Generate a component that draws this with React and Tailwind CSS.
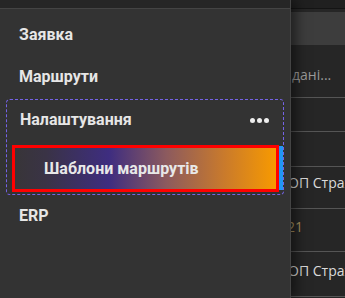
export default function App() {
  const font = { fontFamily: "Roboto, 'Liberation Sans', sans-serif" };
  const item = "flex h-[22px] items-center pl-[13px] text-[16px] font-bold text-[#e6e6e6]";
  return (
    <div className="flex h-[298px] w-[345px] overflow-hidden bg-[#262626]" style={font}>
      <aside className="relative z-10 flex h-full w-[291px] shrink-0 flex-col border-r border-[#444] bg-[#333333] shadow-[5px_0_12px_rgba(0,0,0,0.5)]">
        <div className="h-[9px] shrink-0 border-b border-[#444] bg-[#262626]" />
        <nav className="flex flex-col px-[6px] pt-[15px]">
          <div className={item}>Заявка</div>
          <div className={"mt-[20px] " + item}>Маршрути</div>
          <div className="mt-[11px] rounded-[4px] border border-dashed border-[#7563e6] pb-[2px]">
            <div className="flex h-[45px] items-center justify-between pb-[5px] pl-[13px] pr-[14px] text-[16px] font-bold text-[#e6e6e6]">
              <span>Налаштування</span>
              <span className="flex gap-[2px]">
                <span className="h-[5px] w-[5px] rounded-full bg-[#eeeeee]" />
                <span className="h-[5px] w-[5px] rounded-full bg-[#eeeeee]" />
                <span className="h-[5px] w-[5px] rounded-full bg-[#eeeeee]" />
              </span>
            </div>
            <div className="flex">
              <div className="ml-[5px] flex h-[47px] flex-1 items-center border-[3px] border-[#ff0000] bg-[linear-gradient(90deg,#383538_0%,#3a3346_12%,#3e2d80_36%,#8c5a5e_58%,#c97a2c_80%,#f89a00_100%)] pl-[29px] text-[16px] font-bold text-[#e8e8e8]">
                Шаблони маршрутів
              </div>
              <div className="mt-[1px] h-[44px] w-[4px] bg-[#2196f3]" />
            </div>
          </div>
          <div className={"mt-[10px] " + item}>ERP</div>
        </nav>
      </aside>
      <main className="flex flex-1 flex-col bg-[#262626] text-[14px] text-[#dadada]" style={{ fontFamily: "'Open Sans', 'Liberation Sans', sans-serif" }}>
        <div className="h-[9px] shrink-0 border-b border-[#141414] bg-[#202020]" />
        <div className="mt-[3px] h-[33px] shrink-0 bg-[#3d3d3d]" />
        <div className="flex h-[53px] shrink-0 items-center border-b border-[#555] pt-[6px] text-[#9a9a9a]">
          <span className="ml-[1px]">дані...</span>
        </div>
        <div className="h-[34px] shrink-0 border-b border-[#555]" />
        <div className="h-[35px] shrink-0 border-b border-[#555]" />
        <div className="flex h-[42px] shrink-0 items-center whitespace-nowrap border-b border-[#555] pb-[11px]">
          <span className="-ml-[3px]">ОП Страх</span>
        </div>
        <div className="flex h-[43px] shrink-0 items-center border-b border-[#555] pb-[8px] text-[#a8925f]">
          <span className="-ml-[4px]">21</span>
        </div>
        <div className="flex h-[45px] shrink-0 items-center whitespace-nowrap border-b border-[#555] pb-[8px]">
          <span className="-ml-[3px]">ОП Страх</span>
        </div>
      </main>
    </div>
  );
}
